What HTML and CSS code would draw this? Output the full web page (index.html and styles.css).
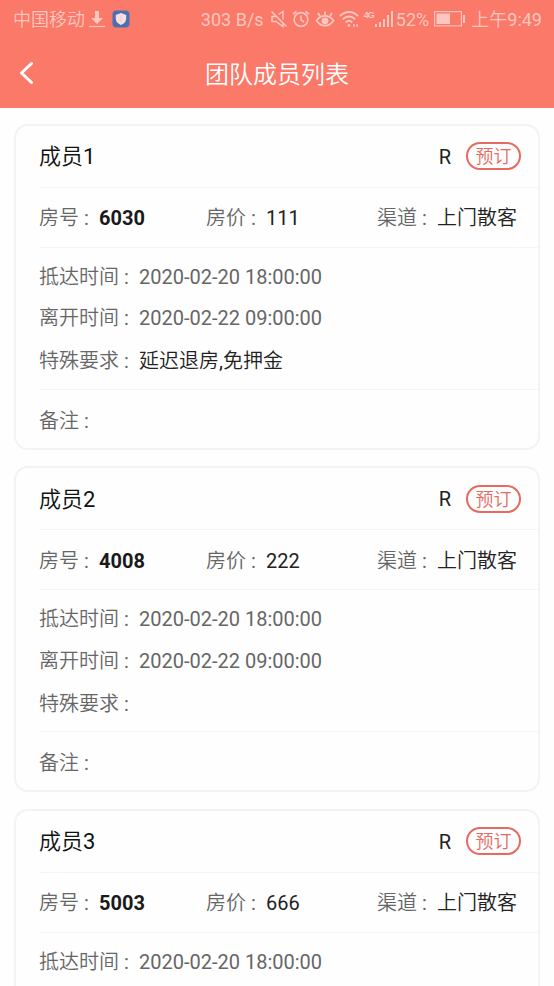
FILE: index.html
```html
<!DOCTYPE html>
<html lang="zh-CN">
<head>
<meta charset="utf-8">
<meta name="viewport" content="width=device-width, initial-scale=1">
<title>团队成员列表</title>
<link rel="stylesheet" href="styles.css">
</head>
<body>
<header class="header">
  <div class="status">
    <div class="status-left">
      <span>中国移动</span>
      <svg class="download" width="18" height="18" viewBox="0 0 18 18"><path d="M7 1h4v7h4l-6 6-6-6h4z" fill="currentColor"/><path d="M1 16.5h16" stroke="currentColor" stroke-width="1.2"/></svg>
      <svg class="shield" width="18" height="18" viewBox="0 0 18 18"><rect x=".5" y=".5" width="17" height="17" rx="4" fill="#4b70b1"/><path d="M9 3l5.2 2v3.7c0 2.900-2 4.700-5.200 6.300-3.200-1.600-5.200-3.400-5.200-6.300V5z" fill="#f5dfe2"/><path d="M9 6v6" stroke="#d9c6d0" stroke-width=".8"/></svg>
    </div>
    <div class="status-right">
      <span class="speed">303 B/s</span>
      <svg class="mute" width="18" height="18" viewBox="0 0 18 18" fill="none" stroke="currentColor" stroke-width="1.500"><path d="M6 6.500H2v5h4l7 5v-4M8.500 4.500L13 1.500v8M1.500 1.500l15 15"/></svg>
      <svg class="alarm" width="18" height="18" viewBox="0 0 18 18" fill="none" stroke="currentColor" stroke-width="1.600"><circle cx="9" cy="9.500" r="6.900"/><path d="M9 5.500v4.300l3 2.200M1 4.200L4.500 1.300M17 4.200l-3.500-2.900"/></svg>
      <svg class="eye" width="20" height="18" viewBox="0 0 20 18" fill="none" stroke="currentColor" stroke-width="1.800"><path d="M1.500 10.500C6 4.200 14 4.200 18.500 10.500 14 17.300 6 17.300 1.500 10.500zM10 5V1.500M5 6L3 3M15 6l2-3"/><circle cx="10" cy="10.800" r="2.500" fill="currentColor"/></svg>
      <svg class="wifi" width="20" height="18" viewBox="0 0 20 18" fill="none" stroke="currentColor" stroke-width="1.900"><path d="M1 6c5.300-5.300 12.700-5.300 18 0M3.800 9.300c3.700-3.700 8.700-3.700 12.400 0M6.700 12.400c2-1.900 4.600-1.900 6.600 0"/><circle cx="10" cy="15.500" r="1.400" fill="currentColor" stroke="none"/><path d="M15 14v3M18 14v3" stroke-width="1.400"/></svg>
      <span class="network">4G</span>
      <svg class="signal" width="18" height="18" viewBox="0 0 18 18" fill="currentColor"><path d="M0 14h2v3H0zM4 12h2v5H4zM8 9h2v8H8zM12 5h2v12h-2zM16 1h2v16h-2z"/></svg>
      <span class="percent">52%</span>
      <svg class="battery" width="31" height="16" viewBox="0 0 31 16"><rect x=".6" y=".6" width="26.800" height="14.300" fill="none" stroke="currentColor" stroke-width="1.100"/><path d="M2.500 2.500h13.500v10.500H2.500zM29 4h2v8h-2z" fill="currentColor"/></svg>
      <span class="clock">上午9:49</span>
    </div>
  </div>
  <nav class="nav">
    <svg class="back" width="16" height="24" viewBox="0 0 16 24"><path d="M12.500 2.500L2.500 12l10 9.500" fill="none" stroke="#fff" stroke-width="3" stroke-linecap="round" stroke-linejoin="round"/></svg>
    <h1>团队成员列表</h1>
  </nav>
</header>
<main class="list">
  <article class="card">
    <div class="head"><h2>成员1</h2><span class="grade">R</span><span class="tag">预订</span></div>
    <div class="room"><div class="field"><span class="label">房号</span><strong>6030</strong></div><div class="field"><span class="label">房价</span><b>111</b></div><div class="field"><span class="label">渠道</span><b>上门散客</b></div></div>
    <div class="detail">
      <p class="field"><span class="label">抵达时间</span>2020-02-20 18:00:00</p>
      <p class="field"><span class="label">离开时间</span>2020-02-22 09:00:00</p>
      <p class="field request"><span class="label">特殊要求</span><b>延迟退房,免押金</b></p>
    </div>
    <div class="remark field"><span class="label">备注</span></div>
  </article>
  <article class="card">
    <div class="head"><h2>成员2</h2><span class="grade">R</span><span class="tag">预订</span></div>
    <div class="room"><div class="field"><span class="label">房号</span><strong>4008</strong></div><div class="field"><span class="label">房价</span><b>222</b></div><div class="field"><span class="label">渠道</span><b>上门散客</b></div></div>
    <div class="detail">
      <p class="field"><span class="label">抵达时间</span>2020-02-20 18:00:00</p>
      <p class="field"><span class="label">离开时间</span>2020-02-22 09:00:00</p>
      <p class="field request"><span class="label">特殊要求</span></p>
    </div>
    <div class="remark field"><span class="label">备注</span></div>
  </article>
  <article class="card">
    <div class="head"><h2>成员3</h2><span class="grade">R</span><span class="tag">预订</span></div>
    <div class="room"><div class="field"><span class="label">房号</span><strong>5003</strong></div><div class="field"><span class="label">房价</span><b>666</b></div><div class="field"><span class="label">渠道</span><b>上门散客</b></div></div>
    <div class="detail">
      <p class="field"><span class="label">抵达时间</span>2020-02-20 18:00:00</p>
    </div>
  </article>
</main>
</body>
</html>
```
FILE: styles.css
```css
*, *::after { box-sizing: border-box; }

body {
  display: flex;
  flex-direction: column;
  margin: 0;
  height: 986px;
  overflow: hidden;
  background: #fefefe;
  color: #666;
  font-family: Roboto, "Noto Sans CJK SC DemiLight", "Noto Sans CJK SC", sans-serif;
  font-size: 20px;
  line-height: 30px;
}

h1, h2, p { margin: 0; font-weight: 400; }

/* Header */
.header { flex: none; height: 107.500px; background: #fb7969; color: #fff; }

.status {
  display: flex;
  justify-content: space-between;
  height: 38px;
  padding: 0 12px 0 13px;
  color: #fdc6bf;
  font-size: 18px;
  line-height: 38px;
  white-space: nowrap;
}
.status-left, .status-right { display: flex; align-items: center; }
.status-left span, .clock { padding-top: 1px; }
.status svg { flex: none; }
.download { margin-left: 3px; }
.shield { margin-left: 6px; }
.speed { width: 64px; padding-top: 1px; }
.mute { margin-left: 5px; }
.alarm { margin-left: 4px; }
.eye { margin-left: 5px; }
.wifi { margin-left: 4px; }
.network {
  width: 10px;
  margin-left: 5px;
  font-family: "Liberation Sans", sans-serif;
  font-size: 9px;
  font-weight: 700;
  line-height: 10px;
  letter-spacing: -1px;
  padding-bottom: 9px;
}
.signal { margin-left: 1px; }
.percent { margin-left: 3px; padding-top: 1px; }
.battery { margin-left: 5px; }
.clock { margin-left: 6px; }

.nav {
  display: grid;
  grid-template-columns: 40px 1fr 40px;
  align-items: center;
  height: 69px;
}
.back { margin-left: 19px; }
.nav h1 { font-size: 24px; line-height: 36px; text-align: center; padding-top: 4px; }

/* Member cards */
.list {
  display: flex;
  flex: 1;
  flex-direction: column;
  min-height: 0;
  gap: 16.500px;
  padding: 16px 14px 0;
}
.card {
  flex: none;
  height: 326px;
  padding-left: 23px;
  border: 2px solid #f3f3f3;
  border-radius: 14px;
  background: #fefefe;
}
.card:last-child {
  flex: 1;
  height: auto;
  min-height: 0;
  overflow: hidden;
  border-bottom: 0;
  border-radius: 14px 14px 0 0;
}
.head {
  display: flex;
  align-items: center;
  height: 62px;
  padding-right: 17px;
  border-bottom: 1px solid #f5f5f5;
}
.head h2 { flex: 1; color: #111; font-size: 22px; padding-top: 2px; }
.grade { color: #222; margin-right: 15px; padding-top: 1px; }
.tag {
  width: 55px;
  height: 28px;
  border: 2px solid #e76a61;
  border-radius: 14px;
  color: #e76a61;
  font-size: 18px;
  line-height: 25px;
  text-align: center;
}
.room {
  display: grid;
  grid-template-columns: 167px 171px 1fr;
  align-items: center;
  height: 60px;
  padding-top: 2px;
  border-bottom: 1px solid #f5f5f5;
}
.room strong { color: #1a1a1a; font-weight: 700; }
b { color: #222; font-weight: 400; }

.field { display: flex; align-items: center; white-space: nowrap; }
.label { display: flex; }
.label::after {
  content: ":";
  width: 20px;
  padding-left: 5px;
}

.detail { padding-top: 14px; }
.card:not(:last-child) .detail { height: 142px; border-bottom: 1px solid #f5f5f5; }
.detail p { height: 30px; margin-bottom: 11.500px; }
.detail .request { padding-top: 3px; }
.remark { height: 60px; padding-top: 2px; }
```
